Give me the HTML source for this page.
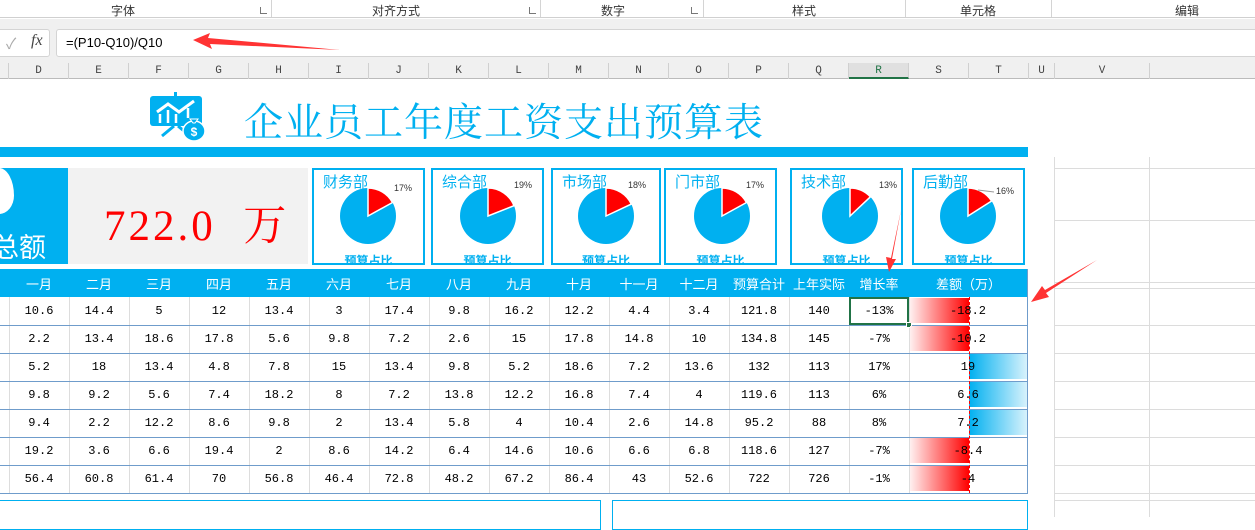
<!DOCTYPE html>
<html><head><meta charset="utf-8"><style>
*{margin:0;padding:0;box-sizing:border-box}
body{width:1255px;height:516px;overflow:hidden;background:#fff;position:relative;font-family:"Liberation Sans","Noto Sans CJK SC",sans-serif}
.a{position:absolute}
.rib{font-size:12px;color:#333;top:2px}
.sep{top:0;width:1px;height:17px;background:#d4d4d4}
.cl{top:63px;height:16px;font-size:11px;color:#444;text-align:center;line-height:16px;font-family:"Liberation Mono",monospace;border-right:1px solid #d0d0d0}
.card{border:2px solid #00b0f0;top:168px;height:97px;background:#fff;overflow:hidden}
.card .t{position:absolute;left:9px;top:1px;font-size:15px;color:#00b0f0}
.card .b{position:absolute;left:0;right:0;top:82px;text-align:center;font-size:12px;color:#00b0f0;font-weight:bold}
.card .p{position:absolute;font-size:9px;color:#333}
table{border-collapse:collapse;position:absolute;left:0;top:269px;table-layout:fixed}
td{height:28px;text-align:center;font-size:12px;font-family:"Liberation Mono","Noto Sans CJK SC",monospace;color:#000;border-left:1px solid #ddd;border-bottom:1px solid #6f9ccb;padding:0;position:relative}
td:first-child{border-left:none}
tr.h td{background:#00b0f0;color:#fff;font-family:"Liberation Sans","Noto Sans CJK SC",sans-serif;font-size:13px;border-left:none;border-bottom:none}
.gl{background:#dcdcdc}
</style></head><body>
<div class="a" style="left:0;top:0;width:1255px;height:18px;background:#fff;border-bottom:1px solid #d0d0d0"></div>
<div class="a rib" style="left:111px">字体</div>
<div class="a rib" style="left:372px">对齐方式</div>
<div class="a rib" style="left:601px">数字</div>
<div class="a rib" style="left:792px">样式</div>
<div class="a rib" style="left:960px">单元格</div>
<div class="a rib" style="left:1175px">编辑</div>
<div class="a" style="left:260px;top:7px;width:7px;height:7px;border-left:1px solid #777;border-bottom:1px solid #777;font-size:0"></div>
<div class="a" style="left:529px;top:7px;width:7px;height:7px;border-left:1px solid #777;border-bottom:1px solid #777"></div>
<div class="a" style="left:691px;top:7px;width:7px;height:7px;border-left:1px solid #777;border-bottom:1px solid #777"></div>
<div class="a sep" style="left:271px"></div><div class="a sep" style="left:540px"></div><div class="a sep" style="left:703px"></div><div class="a sep" style="left:905px"></div><div class="a sep" style="left:1051px"></div>
<div class="a" style="left:0;top:19px;width:1255px;height:44px;background:#f0f0f0"></div>
<div class="a" style="left:-5px;top:29px;width:55px;height:28px;background:#fff;border:1px solid #d4d4d4;border-radius:3px"></div>
<div class="a" style="left:6px;top:33px;font-size:15px;color:#aaa">✓</div>
<div class="a" style="left:31px;top:32px;font-size:16px;color:#444;font-family:'Liberation Serif',serif;font-style:italic">fx</div>
<div class="a" style="left:56px;top:29px;width:1210px;height:28px;background:#fff;border:1px solid #d4d4d4;border-radius:3px"></div>
<div class="a" style="left:66px;top:35px;font-size:13px;color:#000">=(P10-Q10)/Q10</div>
<div class="a" style="left:0;top:63px;width:1255px;height:16px;background:#f0f0f0;border-bottom:1px solid #bbb"></div>
<div class="a cl" style="left:0;width:9px"></div>
<div class="a cl" style="left:9px;width:60px">D</div><div class="a cl" style="left:69px;width:60px">E</div><div class="a cl" style="left:129px;width:60px">F</div><div class="a cl" style="left:189px;width:60px">G</div><div class="a cl" style="left:249px;width:60px">H</div><div class="a cl" style="left:309px;width:60px">I</div><div class="a cl" style="left:369px;width:60px">J</div><div class="a cl" style="left:429px;width:60px">K</div><div class="a cl" style="left:489px;width:60px">L</div><div class="a cl" style="left:549px;width:60px">M</div><div class="a cl" style="left:609px;width:60px">N</div><div class="a cl" style="left:669px;width:60px">O</div><div class="a cl" style="left:729px;width:60px">P</div><div class="a cl" style="left:789px;width:60px">Q</div>
<div class="a cl" style="left:849px;width:60px;background:#e0e0e0;color:#217346;border-bottom:2px solid #217346">R</div>
<div class="a cl" style="left:909px;width:60px">S</div><div class="a cl" style="left:969px;width:60px">T</div><div class="a cl" style="left:1029px;width:26px">U</div><div class="a cl" style="left:1055px;width:95px">V</div>
<div class="a gl" style="left:1054px;top:157px;width:1px;height:360px"></div>
<div class="a gl" style="left:1149px;top:157px;width:1px;height:360px"></div>
<div class="a gl" style="left:1054px;top:168px;width:201px;height:1px"></div>
<div class="a gl" style="left:1054px;top:220px;width:201px;height:1px"></div>
<div class="a gl" style="left:1054px;top:282px;width:201px;height:1px"></div>
<div class="a gl" style="left:1054px;top:288px;width:201px;height:1px"></div>
<div class="a gl" style="left:1054px;top:325px;width:201px;height:1px"></div>
<div class="a gl" style="left:1054px;top:353px;width:201px;height:1px"></div>
<div class="a gl" style="left:1054px;top:381px;width:201px;height:1px"></div>
<div class="a gl" style="left:1054px;top:409px;width:201px;height:1px"></div>
<div class="a gl" style="left:1054px;top:437px;width:201px;height:1px"></div>
<div class="a gl" style="left:1054px;top:465px;width:201px;height:1px"></div>
<div class="a gl" style="left:1054px;top:493px;width:201px;height:1px"></div>
<div class="a gl" style="left:1054px;top:500px;width:201px;height:1px"></div>
<svg class="a" style="left:148px;top:92px" width="60" height="50" viewBox="0 0 60 50">
<rect x="2" y="4" width="52" height="30" rx="3" fill="#00b0f0"/>
<rect x="26" y="0" width="3" height="5" fill="#00b0f0"/>
<path d="M26 34 L14 44 M30 34 L42 44" stroke="#00b0f0" stroke-width="3"/>
<path d="M9 20 L20 12 L31 20 L46 9" stroke="#fff" stroke-width="3" fill="none"/>
<path d="M12 22v9M20 18v13M28 22v9M40 16v10" stroke="#fff" stroke-width="2.5"/>
<ellipse cx="46" cy="39" rx="11" ry="10" fill="#00b0f0" stroke="#fff" stroke-width="1.5"/>
<path d="M42 27 L50 27 L47 31 L45 31Z" fill="#00b0f0" stroke="#fff"/>
<text x="46" y="44" font-size="12" fill="#fff" text-anchor="middle" font-weight="bold" font-family="Liberation Sans">$</text>
</svg>
<div class="a" style="left:244px;top:92px;font-size:39px;color:#00b0f0;font-family:'Liberation Serif','Noto Serif CJK SC',serif;letter-spacing:1px">企业员工年度工资支出预算表</div>
<div class="a" style="left:0;top:147px;width:1028px;height:10px;background:#00b0f0"></div>
<div class="a" style="left:0;top:168px;width:68px;height:96px;background:#00b0f0;overflow:hidden">
<div class="a" style="left:-16px;top:0;width:30px;height:46px;background:#fff;border-radius:50% 50% 50% 50%/60% 60% 40% 40%"></div>
<div class="a" style="left:-8px;top:58px;font-size:27px;color:#fff">总额</div></div>
<div class="a" style="left:68px;top:168px;width:240px;height:96px;background:#f2f2f2"></div>
<div class="a" style="left:104px;top:192px;font-size:43px;color:#f00;font-family:'Liberation Serif','Noto Serif CJK SC',serif;letter-spacing:3px;white-space:pre">722.0  万</div>
<div class="a card" style="left:312px;width:113px"><span class="t">财务部</span><span class="p" style="left:80px;top:13px">17%</span>
<svg class="a" style="left:0;top:0" width="113" height="97"><circle cx="54" cy="46" r="28" fill="#00b0f0"/><path d="M54 46 L54 18 A28 28 0 0 1 78.5 32.5Z" fill="#f00" stroke="#fff" stroke-width="1.5"/></svg><span class="b">预算占比</span></div>
<div class="a card" style="left:431px;width:113px"><span class="t">综合部</span><span class="p" style="left:81px;top:10px">19%</span>
<svg class="a" style="left:0;top:0" width="113" height="97"><circle cx="55" cy="46" r="28" fill="#00b0f0"/><path d="M55 46 L55 18 A28 28 0 0 1 81 35.7Z" fill="#f00" stroke="#fff" stroke-width="1.5"/></svg><span class="b">预算占比</span></div>
<div class="a card" style="left:551px;width:110px"><span class="t">市场部</span><span class="p" style="left:75px;top:10px">18%</span>
<svg class="a" style="left:0;top:0" width="110" height="97"><circle cx="53" cy="46" r="28" fill="#00b0f0"/><path d="M53 46 L53 18 A28 28 0 0 1 78.3 34.1Z" fill="#f00" stroke="#fff" stroke-width="1.5"/></svg><span class="b">预算占比</span></div>
<div class="a card" style="left:664px;width:113px"><span class="t">门市部</span><span class="p" style="left:80px;top:10px">17%</span>
<svg class="a" style="left:0;top:0" width="113" height="97"><circle cx="56" cy="46" r="28" fill="#00b0f0"/><path d="M56 46 L56 18 A28 28 0 0 1 80.5 32.5Z" fill="#f00" stroke="#fff" stroke-width="1.5"/></svg><span class="b">预算占比</span></div>
<div class="a card" style="left:790px;width:113px"><span class="t">技术部</span><span class="p" style="left:87px;top:10px">13%</span>
<svg class="a" style="left:0;top:0" width="113" height="97"><circle cx="58" cy="46" r="28" fill="#00b0f0"/><path d="M58 46 L58 18 A28 28 0 0 1 78.4 26.8Z" fill="#f00" stroke="#fff" stroke-width="1.5"/></svg><span class="b">预算占比</span></div>
<div class="a card" style="left:912px;width:113px"><span class="t">后勤部</span><span class="p" style="left:82px;top:16px">16%</span>
<svg class="a" style="left:0;top:0" width="113" height="97"><circle cx="54" cy="46" r="28" fill="#00b0f0"/><path d="M54 46 L54 18 A28 28 0 0 1 77.6 31Z" fill="#f00" stroke="#fff" stroke-width="1.5"/><path d="M64 20 L80 22" stroke="#999"/></svg><span class="b">预算占比</span></div>
<table>
<colgroup><col style="width:9px"><col style="width:60px"><col style="width:60px"><col style="width:60px"><col style="width:60px"><col style="width:60px"><col style="width:60px"><col style="width:60px"><col style="width:60px"><col style="width:60px"><col style="width:60px"><col style="width:60px"><col style="width:60px"><col style="width:60px"><col style="width:60px"><col style="width:60px"><col style="width:119px"></colgroup>
<tr class="h"><td></td><td>一月</td><td>二月</td><td>三月</td><td>四月</td><td>五月</td><td>六月</td><td>七月</td><td>八月</td><td>九月</td><td>十月</td><td>十一月</td><td>十二月</td><td>预算合计</td><td>上年实际</td><td>增长率</td><td>差额（万）</td></tr>
<tr><td></td><td>10.6</td><td>14.4</td><td>5</td><td>12</td><td>13.4</td><td>3</td><td>17.4</td><td>9.8</td><td>16.2</td><td>12.2</td><td>4.4</td><td>3.4</td><td>121.8</td><td>140</td><td style="outline:2px solid #217346;outline-offset:-2px">-13%</td><td></td></tr>
<tr><td></td><td>2.2</td><td>13.4</td><td>18.6</td><td>17.8</td><td>5.6</td><td>9.8</td><td>7.2</td><td>2.6</td><td>15</td><td>17.8</td><td>14.8</td><td>10</td><td>134.8</td><td>145</td><td>-7%</td><td></td></tr>
<tr><td></td><td>5.2</td><td>18</td><td>13.4</td><td>4.8</td><td>7.8</td><td>15</td><td>13.4</td><td>9.8</td><td>5.2</td><td>18.6</td><td>7.2</td><td>13.6</td><td>132</td><td>113</td><td>17%</td><td></td></tr>
<tr><td></td><td>9.8</td><td>9.2</td><td>5.6</td><td>7.4</td><td>18.2</td><td>8</td><td>7.2</td><td>13.8</td><td>12.2</td><td>16.8</td><td>7.4</td><td>4</td><td>119.6</td><td>113</td><td>6%</td><td></td></tr>
<tr><td></td><td>9.4</td><td>2.2</td><td>12.2</td><td>8.6</td><td>9.8</td><td>2</td><td>13.4</td><td>5.8</td><td>4</td><td>10.4</td><td>2.6</td><td>14.8</td><td>95.2</td><td>88</td><td>8%</td><td></td></tr>
<tr><td></td><td>19.2</td><td>3.6</td><td>6.6</td><td>19.4</td><td>2</td><td>8.6</td><td>14.2</td><td>6.4</td><td>14.6</td><td>10.6</td><td>6.6</td><td>6.8</td><td>118.6</td><td>127</td><td>-7%</td><td></td></tr>
<tr><td></td><td>56.4</td><td>60.8</td><td>61.4</td><td>70</td><td>56.8</td><td>46.4</td><td>72.8</td><td>48.2</td><td>67.2</td><td>86.4</td><td>43</td><td>52.6</td><td>722</td><td>726</td><td>-1%</td><td></td></tr>
</table>
<div class="a" style="left:1027px;top:269px;width:1px;height:225px;background:#6f9ccb"></div>
<div class="a" style="left:906px;top:322px;width:6px;height:6px;background:#217346;border:1px solid #fff"></div>
<div class="a" style="left:910px;top:298px;width:59px;height:25px;background:linear-gradient(90deg,#fff0f0,#f00)"></div>
<div class="a" style="left:910px;top:326px;width:59px;height:25px;background:linear-gradient(90deg,#fff0f0,#f00)"></div>
<div class="a" style="left:969px;top:354px;width:58px;height:25px;background:linear-gradient(90deg,#00b0f0,#d8f2fc)"></div>
<div class="a" style="left:969px;top:382px;width:58px;height:25px;background:linear-gradient(90deg,#00b0f0,#d8f2fc)"></div>
<div class="a" style="left:969px;top:410px;width:58px;height:25px;background:linear-gradient(90deg,#00b0f0,#d8f2fc)"></div>
<div class="a" style="left:910px;top:438px;width:59px;height:25px;background:linear-gradient(90deg,#fff0f0,#f00)"></div>
<div class="a" style="left:910px;top:466px;width:59px;height:25px;background:linear-gradient(90deg,#fff0f0,#f00)"></div>
<div class="a" style="left:969px;top:297px;width:0;height:196px;border-left:1px dashed #f00"></div>
<div class="a" style="left:909px;top:297px;width:118px;font-family:'Liberation Mono',monospace;font-size:12px;text-align:center;line-height:28px">
<div>-18.2</div><div>-10.2</div><div>19</div><div>6.6</div><div>7.2</div><div>-8.4</div><div>-4</div></div>
<div class="a" style="left:-2px;top:500px;width:603px;height:30px;border:1px solid #00b0f0"></div>
<div class="a" style="left:612px;top:500px;width:416px;height:30px;border:1px solid #00b0f0"></div>
<svg class="a" style="left:0;top:0" width="1255" height="516">
<polygon points="340,50 208,38 210,33 193,40 212,49 210,44" fill="#f33"/>
<polygon points="901,210 891,258 886,257 889,272 896,259 892,259" fill="#f33"/>
<polygon points="1097,260 1045,290 1042,286 1031,302 1049,297 1046,293" fill="#f33"/>
</svg>
</body></html>
